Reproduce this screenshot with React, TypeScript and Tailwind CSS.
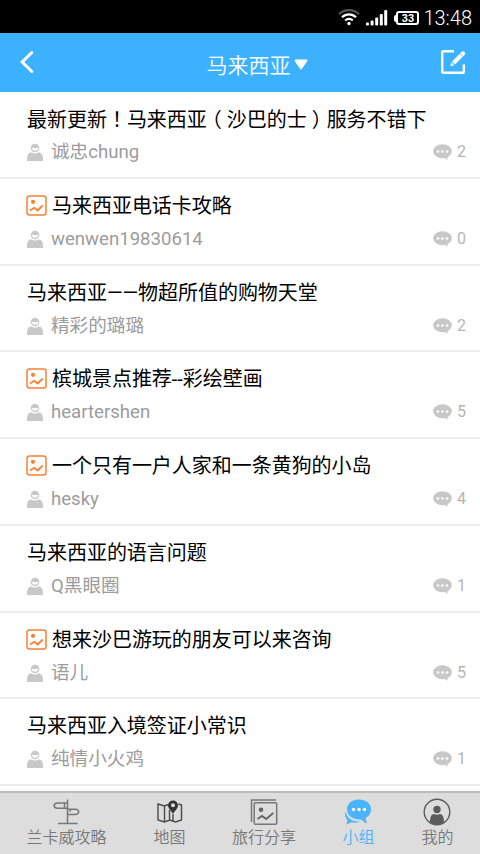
import type { ReactNode } from "react";

interface Topic {
  title: ReactNode;
  author: string;
  replies: number;
  hasImage?: boolean;
}

const topics: Topic[] = [
  {
    // full-width punctuation sits in the middle of its cell
    title: (
      <>
        最新更新<span className="font-['Noto_Sans_CJK_TC',sans-serif]">！</span>马来西亚
        <span className="px-[5px] [font-feature-settings:'halt']">（</span>沙巴的士
        <span className="px-[5px] [font-feature-settings:'halt']">）</span>服务不错下
      </>
    ),
    author: "诚忠chung",
    replies: 2,
  },
  { title: "马来西亚电话卡攻略", author: "wenwen19830614", replies: 0, hasImage: true },
  { title: "马来西亚——物超所值的购物天堂", author: "精彩的璐璐", replies: 2 },
  { title: "槟城景点推荐--彩绘壁画", author: "heartershen", replies: 5, hasImage: true },
  { title: "一个只有一户人家和一条黄狗的小岛", author: "hesky", replies: 4, hasImage: true },
  { title: "马来西亚的语言问题", author: "Q黑眼圈", replies: 1 },
  { title: "想来沙巴游玩的朋友可以来咨询", author: "语儿", replies: 5, hasImage: true },
  { title: "马来西亚入境签证小常识", author: "纯情小火鸡", replies: 1 },
];

function StatusBar() {
  return (
    <div className="flex h-[33px] shrink-0 items-center justify-end bg-black pr-[8px] pt-[3px] text-white">
      <svg className="mb-[2px]" width="22" height="18" viewBox="0 0 22 18" fill="none" strokeWidth="2.2">
        <path d="M1 6.2C6.5.8 15.500.8 21 6.200" stroke="#555" />
        <path d="M4 9.300c4-4 10-4 14 0M7.200 12.500c2.200-2.200 5.400-2.200 7.600 0" stroke="#fff" />
        <circle cx="11" cy="15.500" r="1.700" fill="#fff" />
      </svg>
      <svg className="ml-[6px]" width="22" height="16" viewBox="0 0 22 16" fill="#fff">
        <rect x="0" y="12.500" width="3" height="3" rx="1" />
        <rect x="4.600" y="10.500" width="3" height="5" rx="1" />
        <rect x="9.200" y="7.500" width="3" height="8" rx="1" />
        <rect x="13.800" y="4" width="3" height="11.500" rx="1" />
        <rect x="18.200" y="0" width="3" height="15.500" rx="1" />
      </svg>
      <div className="ml-[6px] flex items-center">
        <span className="h-[7px] w-[2px] rounded-l-sm bg-white" />
        <span className="flex h-[14px] w-[23px] items-center justify-center rounded-[3px] border-2 border-white font-['Liberation_Sans',sans-serif] text-[11px] leading-none font-bold">
          33
        </span>
      </div>
      <span className="ml-[4px] font-[Roboto,sans-serif] text-[20px] leading-none font-light">13:48</span>
    </div>
  );
}

function Header() {
  return (
    <header className="grid h-[59px] shrink-0 grid-cols-[1fr_auto_1fr] items-center bg-[#3cb2ff] text-white">
      <svg className="mb-px ml-[20px]" width="14" height="24" viewBox="0 0 14 24" fill="none" stroke="#fff" strokeWidth="3" strokeLinecap="round">
        <path d="M11.800 2.500 2.200 12l9.600 9.500" />
      </svg>
      <div className="flex items-center pt-[8px] pl-[34px]">
        <h1 className="text-[21px] leading-none font-[350]">马来西亚</h1>
        <svg className="mb-[4px] ml-[3px]" width="14" height="11" viewBox="0 0 14 11" fill="#fff" stroke="#fff" strokeWidth="2" strokeLinejoin="round">
          <path d="M1.500 1.500h11L7 9.500z" />
        </svg>
      </div>
      <svg className="mr-[14px] mb-[2px] justify-self-end" width="26" height="26" viewBox="0 0 26 26" fill="none" stroke="#fff" strokeWidth="2.400">
        <path d="M14 2.200H3.500q-1.300 0-1.300 1.300v19q0 1.300 1.300 1.300h19q1.300 0 1.300-1.300V15.500" />
        <path d="m13.500 14 7-7" strokeWidth="4.200" />
        <path d="m21.500 6 1.500-1.500" strokeWidth="4.200" strokeLinecap="round" />
        <path d="m20 4.500 3 3" stroke="#3cb2ff" strokeWidth="0.800" />
        <path d="m10.300 17.200 1-4 3 3z" fill="#fff" stroke="none" />
      </svg>
    </header>
  );
}

function PictureIcon() {
  return (
    <svg className="mr-[5px] mb-px -ml-px shrink-0" width="21" height="21" viewBox="0 0 21 21" fill="none" stroke="#fb8030" strokeWidth="1.500">
      <rect x="1" y="1" width="19" height="19" rx="2.500" />
      <circle cx="7" cy="6.800" r="2.100" fill="#fb8030" stroke="none" />
      <path d="m4 15.500 4.200-2.700 3.500 2.700 5-5" strokeWidth="1.800" />
    </svg>
  );
}

function AuthorIcon() {
  return (
    <svg className="mr-[8px] shrink-0" width="16" height="18" viewBox="0 0 16 18" fill="#c8c8c8">
      <path d="M0 18v-2.500C0 12 1.500 9.700 4 9.200c2.500 1.800 5.500 1.800 8 0 2.500.5 4 2.800 4 6.300V18z" />
      <circle cx="8" cy="5" r="4.300" />
      <path d="M4.700 4.700c2 .6 4.600.6 6.600 0 0 4-6.600 4-6.600 0z" fill="#fff" />
    </svg>
  );
}

function ReplyIcon() {
  return (
    <svg width="19" height="16" viewBox="0 0 19 16" fill="#c8c8c8">
      <ellipse cx="9.500" cy="7.300" rx="9.300" ry="7" />
      <path d="m10 13 4.500 2.800V12z" />
      <g fill="#fff">
        <circle cx="5" cy="7.500" r="1.300" />
        <circle cx="9.500" cy="7.500" r="1.300" />
        <circle cx="14" cy="7.500" r="1.300" />
      </g>
    </svg>
  );
}

function TopicRow({ topic }: { topic: Topic }) {
  return (
    <li className="h-[86.75px] shrink-0 border-b-2 border-[#ececec] pt-[13px] pr-[14px] pl-[27px]">
      <div className="flex h-[28px] items-center">
        {topic.hasImage && <PictureIcon />}
        <h2 className="text-[20px] leading-[28px] tracking-[-0.03px] whitespace-nowrap text-black">{topic.title}</h2>
      </div>
      <div className="mt-[5px] flex h-[28px] items-center">
        <AuthorIcon />
        <span className="text-[18.6px] leading-[28px] text-[#9c9c9c]">{topic.author}</span>
        <span className="ml-auto flex items-center">
          <ReplyIcon />
          <span className="ml-[5px] text-[16px] leading-none text-[#b5b5b5]">{topic.replies}</span>
        </span>
      </div>
    </li>
  );
}

function SignpostIcon() {
  return (
    <svg className="-ml-[2px]" width="28" height="28" viewBox="0 0 28 28" fill="none" stroke="#777" strokeWidth="1.500">
      <path d="M15.500 1.500v24M6 25.500h19.500M15.500 5H5.500Q2.500 5 2 7.700 2.500 10.300 5.500 10.300h10M15.500 11.200h8q3 .3 3.200 2.500-.2 2.500-3.200 2.700h-8M12.500 5v5.300M18 11.200v2.500" />
    </svg>
  );
}

function MapIcon() {
  return (
    <svg width="28" height="28" viewBox="0 0 28 28" fill="none" stroke="#4a4a4a" strokeWidth="1.400">
      <path d="M12.500 6.500 8.500 8 2 6v16l6.500 2 5.500-2 5.500 2 6-2V7l-3-1M8.500 8v16M13.500 12v10M17 16v7" />
      <path d="M17 14.500c-2-3-4.300-4.200-4.300-7a4.300 4.300 0 0 1 8.600 0c0 2.800-2.300 4-4.300 7z" fill="#333" stroke="#333" />
      <circle cx="17" cy="7.300" r="2" fill="#ddd" stroke="none" />
    </svg>
  );
}

function AlbumIcon() {
  return (
    <svg width="28" height="28" viewBox="0 0 28 28" fill="none" stroke="#777" strokeWidth="1.500">
      <path d="M1.500 24V2H26" />
      <rect x="4.200" y="4.700" width="22.500" height="21.500" rx="1" />
      <circle cx="11" cy="11.800" r="2.300" fill="#666" stroke="none" />
      <path d="m7.500 21 4.500-3 4.200 3 7-6" stroke="#666" strokeWidth="1.900" />
    </svg>
  );
}

function GroupIcon() {
  return (
    <svg className="-ml-[2px]" width="28" height="28" viewBox="0 0 28 28" fill="#4ab4fa">
      <path d="M2 13.500c-1.500 2.500-1 6 1.500 8.500l-1 4.500 5-2.200c3 .8 6 .5 8.500-.8-3 .2-7 0-10-2.500-2.500-2-4-4.500-4-7.500z" />
      <path d="M15 1.500c7 0 12 4.300 12 10 0 4-2.300 7-5.500 8.500l1.300 6-5.800-4.500c-8 .5-14-4-14-10s5-10 12-10z" />
      <path d="M2.700 13c.8 4.700 4.300 8 9.500 9" fill="none" stroke="#ddd" />
      <g fill="#fff">
        <circle cx="9.500" cy="11.500" r="1.700" />
        <circle cx="15" cy="11.500" r="1.700" />
        <circle cx="20.500" cy="11.500" r="1.700" />
      </g>
    </svg>
  );
}

function ProfileIcon() {
  return (
    <svg className="-ml-px" width="28" height="28" viewBox="0 0 28 28" fill="#5c5c5c">
      <circle cx="14" cy="14" r="12.800" fill="none" stroke="#5c5c5c" strokeWidth="1.400" />
      <circle cx="14" cy="11.500" r="3.700" />
      <path d="M7 24.500c0-5 1-8 4-8.500 2 1 4 1 6 0 3 .5 4 3.500 4 8.500-4 2.800-10 2.800-14 0z" />
    </svg>
  );
}

const tabs = [
  { label: "兰卡威攻略", icon: <SignpostIcon />, width: "w-[133px]" },
  { label: "地图", icon: <MapIcon />, width: "w-[73px]" },
  { label: "旅行分享", icon: <AlbumIcon />, width: "w-[116px]" },
  { label: "小组", icon: <GroupIcon />, width: "w-[73px]", active: true },
  { label: "我的", icon: <ProfileIcon />, width: "w-[85px]" },
];

export default function App() {
  return (
    <div className="flex h-[854px] w-[480px] flex-col overflow-hidden bg-white font-[Roboto,'Noto_Sans_CJK_SC',sans-serif]">
      <StatusBar />
      <Header />
      <ul className="flex min-h-0 flex-1 flex-col overflow-hidden">
        {topics.map((topic) => (
          <TopicRow key={topic.author} topic={topic} />
        ))}
      </ul>
      <nav className="flex h-[63px] shrink-0 border-t-2 border-[#bbb] bg-[#ddd]">
        {tabs.map((tab) => (
          <div key={tab.label} className={`${tab.width} flex flex-col items-center pt-[5px]`}>
            {tab.icon}
            <span
              className={`mt-[2px] text-[16px] leading-[20px] font-[350] whitespace-nowrap ${tab.active ? "text-[#4ab4fa]" : "text-[#777]"}`}
            >
              {tab.label}
            </span>
          </div>
        ))}
      </nav>
    </div>
  );
}
